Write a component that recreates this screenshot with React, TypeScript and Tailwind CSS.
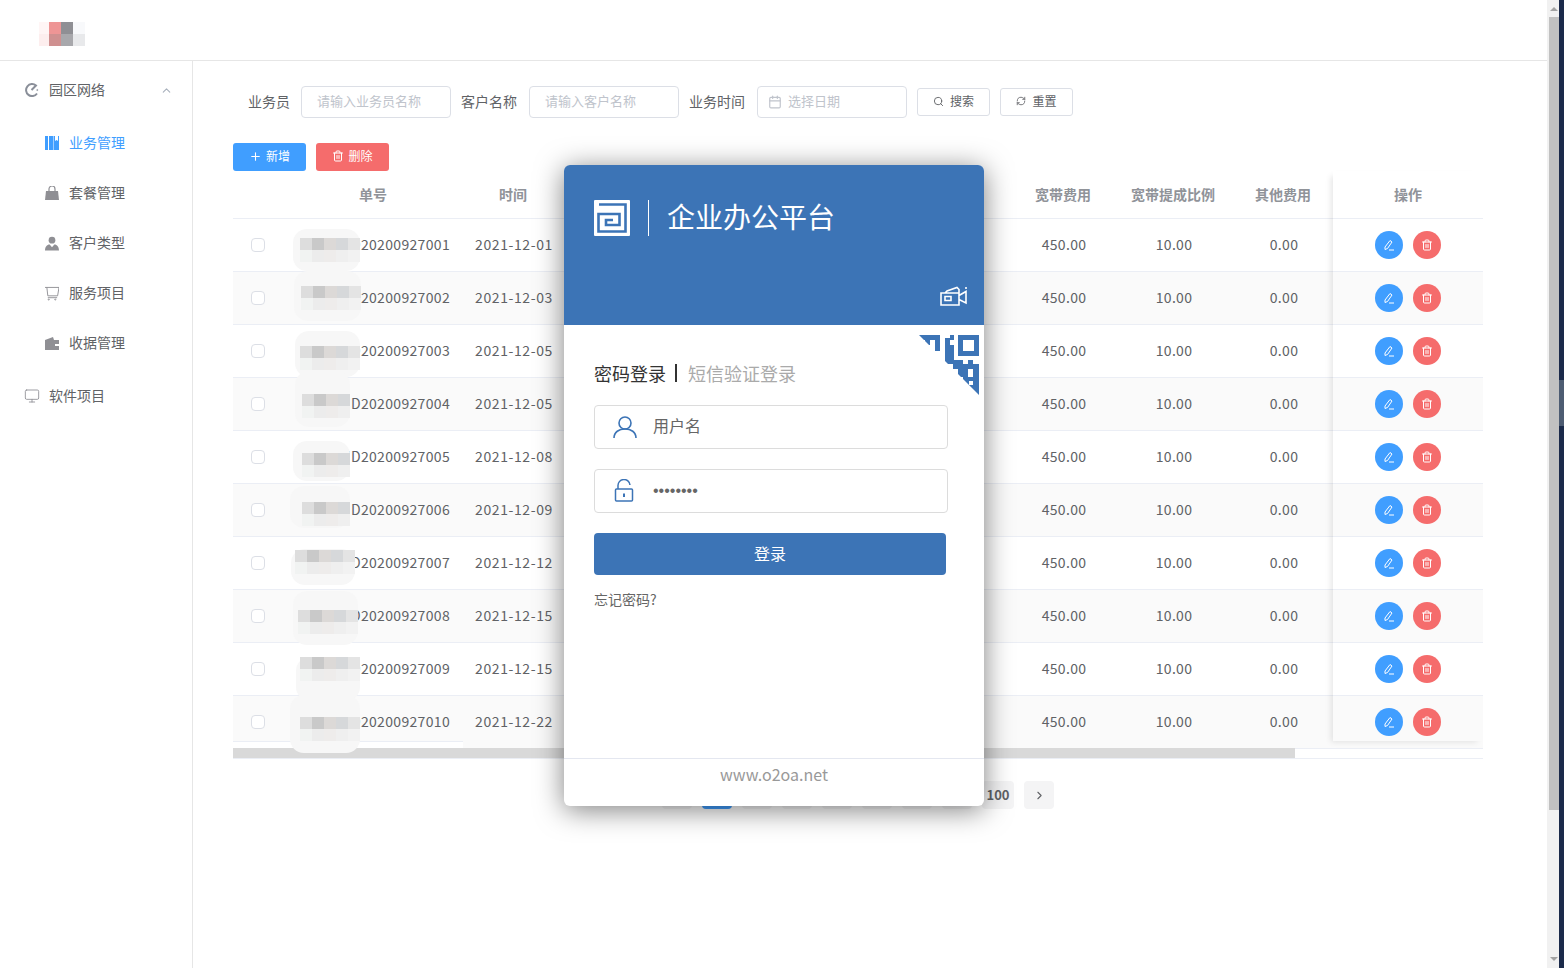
import { ChevronLeft, ChevronRight, ChevronUp, Calendar, Monitor, Plus, RefreshCw, Search, Trash2 } from 'lucide-react';

const rows = [
  { no: 'ID20200927001', date: '2021-12-01' },
  { no: 'ID20200927002', date: '2021-12-03' },
  { no: 'ID20200927003', date: '2021-12-05' },
  { no: 'ID20200927004', date: '2021-12-05' },
  { no: 'ID20200927005', date: '2021-12-08' },
  { no: 'ID20200927006', date: '2021-12-09' },
  { no: 'ID20200927007', date: '2021-12-12' },
  { no: 'ID20200927008', date: '2021-12-15' },
  { no: 'ID20200927009', date: '2021-12-15' },
  { no: 'ID20200927010', date: '2021-12-22' },
];

// mosaic smudges laid over the first column, coordinates relative to the table
const smudges = [
  { left: 60, top: 58, width: 67, height: 42, dark: 9, blocks: 5 },
  { left: 61, top: 100, width: 67, height: 50, dark: 15, blocks: 5 },
  { left: 62, top: 160, width: 65, height: 46, dark: 15, blocks: 5 },
  { left: 62, top: 200, width: 55, height: 56, dark: 23, blocks: 4 },
  { left: 60, top: 270, width: 57, height: 40, dark: 12, blocks: 4 },
  { left: 57, top: 315, width: 60, height: 42, dark: 16, blocks: 4 },
  { left: 58, top: 378, width: 64, height: 36, dark: 1, blocks: 5 },
  { left: 60, top: 420, width: 65, height: 54, dark: 19, blocks: 5 },
  { left: 63, top: 486, width: 64, height: 44, dark: 0, blocks: 5 },
  { left: 57, top: 524, width: 70, height: 58, dark: 22, blocks: 5 },
];

const greys = ['bg-[#dddddd]', 'bg-[#c9c9c9]', 'bg-[#dcd9d7]', 'bg-[#d6d8da]', 'bg-[#e4e4e4]'];
const lightGreys = ['bg-[#f1f3f2]', 'bg-[#ececec]', 'bg-[#eeeceb]', 'bg-[#efefef]', 'bg-[#f2f2f2]'];

function Label({ children }: { children: string }) {
  return <span className="pb-[2px] text-sm text-[#606266] whitespace-nowrap">{children}</span>;
}

function FilterInput({ placeholder }: { placeholder: string }) {
  return (
    <div className="flex h-8 w-[150px] items-center rounded border border-[#dcdfe6] pb-[2px] pl-[15px] text-[13px] text-[#c0c4cc]">
      {placeholder}
    </div>
  );
}

function OutlineButton({ icon, children }: { icon: React.ReactNode; children: string }) {
  return (
    <button className="flex h-7 w-[73px] items-center justify-center gap-[6px] rounded-[3px] border border-[#dcdfe6] pb-[2px] text-xs text-[#606266]">
      {icon}
      {children}
    </button>
  );
}

function NavItem({ icon, label, active }: { icon: React.ReactNode; label: string; active?: boolean }) {
  return (
    <div className={`flex h-[50px] items-center gap-[10px] pl-[45px] text-sm ${active ? 'text-[#409eff]' : 'text-[#606266]'}`}>
      <span className="flex w-[14px] justify-center">{icon}</span>
      <span className="pb-[2px]">{label}</span>
    </div>
  );
}

function EditIcon() {
  return (
    <svg width="12" height="12" viewBox="0 0 12 12" fill="none" stroke="white" strokeWidth="1">
      <path d="M2 8 7 1.5l2 1.5-4.5 6.5-2.5 1z" />
      <path d="M6 11h5" />
    </svg>
  );
}

function Row({ index, children }: { index: number; children: React.ReactNode }) {
  return (
    <div className={`flex h-[53px] shrink-0 items-center border-b border-[#ebeef5] text-sm text-[#606266] ${index % 2 === 1 ? 'bg-[#fafafa]' : 'bg-white'}`}>
      {children}
    </div>
  );
}

function HeadRow({ children }: { children: React.ReactNode }) {
  return (
    <div className="flex h-12 shrink-0 items-center border-b border-[#ebeef5] bg-white pb-[2px] text-sm font-bold text-[#909399]">
      {children}
    </div>
  );
}

function QrCorner() {
  return (
    <svg width="60" height="60" viewBox="0 0 60 60" className="absolute left-[355px] top-[10px]">
      <defs>
        <clipPath id="qr-corner">
          <polygon points="0,0 60,0 60,60" />
        </clipPath>
      </defs>
      <g clipPath="url(#qr-corner)" fill="#3c74b6">
        <path d="M39 0h21v21H39zM44 5v11h11V5z" fillRule="evenodd" />
        <rect x="0" y="0" width="21" height="5" />
        <rect x="16" y="0" width="5" height="16" />
        <rect x="6" y="5" width="5" height="5" />
        <rect x="26" y="3" width="5" height="22" />
        <rect x="31" y="0" width="4" height="5" />
        <rect x="31" y="10" width="4" height="15" />
        <rect x="26" y="25" width="18" height="4" />
        <rect x="49" y="25" width="5" height="4" />
        <rect x="34" y="29" width="26" height="5" />
        <rect x="39" y="34" width="10" height="8" />
        <rect x="54" y="34" width="6" height="8" />
        <path d="M44 42h16v18H44zM50 46v4h4v-4z" fillRule="evenodd" />
      </g>
    </svg>
  );
}

function LoginDialog() {
  return (
    <div className="absolute left-[564px] top-[165px] z-20 flex h-[641px] w-[420px] flex-col overflow-hidden rounded-md bg-white shadow-[0_4px_28px_rgba(0,0,0,0.5)]">
      <div className="relative h-40 bg-[#3c74b6] pl-[30px] pt-[35px]">
        <div className="flex h-9 items-center">
          <svg width="36" height="36" viewBox="0 0 36 36">
            <rect width="36" height="36" rx="1" fill="white" />
            <path d="M5 4.5h26.5v27h-27V14h21v11H12v-5h7" fill="none" stroke="#3c74b6" strokeWidth="2.6" />
          </svg>
          <div className="ml-[18px] h-9 w-px bg-white" />
          <span className="ml-[18px] pb-1 text-[28px] leading-9 text-white">企业办公平台</span>
        </div>
        <svg width="28" height="20" viewBox="0 0 28 20" fill="none" stroke="white" strokeWidth="1.6" className="absolute left-[376px] top-[121px]">
          <path d="M1 7h18v12H1zM5 7l2-2 10-3.5 2 2V7M19 9.5l7-4v11.5l-7-3.5M26 1v2" />
          <path d="M5 10.5h6v4H5z" />
        </svg>
      </div>
      <div className="relative flex flex-1 flex-col px-[30px]">
        <QrCorner />
        <div className="mt-[35px] flex h-[26px] items-center text-lg">
          <span className="text-[#333333]">密码登录</span>
          <span className="ml-[9px] mr-[11px] h-[18px] w-[2px] bg-[#333333]" />
          <span className="text-[#aaaaaa]">短信验证登录</span>
        </div>
        <div className="mt-[19px] flex h-11 w-[354px] items-center rounded border border-[#dcdcdc] pl-[18px] text-base text-[#666666]">
          <svg width="24" height="24" viewBox="0 0 24 24" fill="none" stroke="#3c74b6" strokeWidth="1.6">
            <circle cx="12" cy="8" r="6" />
            <path d="M1 23c0-6 5-9 11-9s11 3 11 9" />
          </svg>
          <span className="ml-4 pb-1">用户名</span>
        </div>
        <div className="mt-5 flex h-11 w-[354px] items-center rounded border border-[#dcdcdc] pl-[19px] text-base text-[#666666]">
          <svg width="20" height="24" viewBox="0 0 20 24" fill="none" stroke="#3c74b6" strokeWidth="1.5">
            <rect x="1.5" y="10" width="17" height="12" rx="1" />
            <path d="M4 10V7a6 6 0 0 1 12-1" />
            <path d="M10 14.5v3.5" strokeWidth="2" />
          </svg>
          <span className="ml-[19px] font-['Liberation_Sans',sans-serif] text-base leading-none">••••••••</span>
        </div>
        <button className="mt-5 h-[42px] w-[352px] rounded bg-[#3c74b6] pb-[2px] text-base text-white">登录</button>
        <div className="mt-[14px] text-sm text-[#666666]">忘记密码?</div>
      </div>
      <div className="h-12 border-t border-[#e4e7f0] pt-[3px] text-center text-base text-[#999999]">www.o2oa.net</div>
    </div>
  );
}

function Pagination() {
  const pages = ['1', '2', '3', '4', '5', '6', '7'];
  return (
    <div className="mt-[22px] flex justify-center gap-[10px] text-[13px] font-bold text-[#606266]">
      <span className="flex h-7 w-[30px] items-center justify-center rounded-sm bg-[#f4f4f5]">
        <ChevronLeft size={13} />
      </span>
      {pages.map((page, i) => (
        <span
          key={page}
          className={`flex h-7 w-[30px] items-center justify-center rounded-sm ${i === 0 ? 'bg-[#409eff] text-white' : 'bg-[#f4f4f5]'}`}
        >
          {page}
        </span>
      ))}
      <span className="flex h-7 w-8 items-center justify-center rounded-sm bg-[#f4f4f5]">100</span>
      <span className="flex h-7 w-[30px] items-center justify-center rounded-sm bg-[#f4f4f5]">
        <ChevronRight size={13} />
      </span>
    </div>
  );
}

function Table() {
  return (
    <div className="relative">
      <div className="flex items-start">
        {/* fixed left columns stop short of the horizontal scrollbar */}
        <div className="h-[571px] w-[230px] shrink-0 overflow-hidden border-b border-[#ebeef5]">
          <HeadRow>
            <span className="w-[60px]" />
            <span className="w-[160px] text-center">单号</span>
          </HeadRow>
          {rows.map((row, i) => (
            <Row key={row.no} index={i}>
              <span className="ml-[18px] h-[14px] w-[14px] rounded-sm border border-[#dcdfe6] bg-white" />
              <span className="ml-[28px] w-[157px] pb-[2px] text-right tracking-[0.33px]">{row.no}</span>
            </Row>
          ))}
        </div>
        <div className="min-w-0 flex-1">
          <HeadRow>
            <span className="w-[100px] text-center">时间</span>
            <span className="flex-1" />
            <span className="w-[110px] text-center">宽带费用</span>
            <span className="w-[110px] text-center">宽带提成比例</span>
            <span className="w-[110px] text-center">其他费用</span>
            <span className="w-[145px]" />
          </HeadRow>
          {rows.map((row, i) => (
            <Row key={row.no} index={i}>
              <span className="w-[100px] pb-[2px] pl-[2px] text-center tracking-[0.6px]">{row.date}</span>
              <span className="flex-1" />
              <span className="w-[110px] pb-[2px] pl-[2px] text-center tracking-[0.33px]">450.00</span>
              <span className="w-[110px] pb-[2px] pl-[2px] text-center tracking-[0.33px]">10.00</span>
              <span className="w-[110px] pb-[2px] pl-[2px] text-center tracking-[0.33px]">0.00</span>
              <span className="w-[145px]" />
            </Row>
          ))}
        </div>
      </div>

      {/* fixed action column */}
      <div className="absolute right-0 top-0 h-[570px] w-[150px] overflow-hidden shadow-[-4px_3px_6px_-2px_rgba(0,0,0,0.1)]">
        <HeadRow>
          <span className="w-full text-center">操作</span>
        </HeadRow>
        {rows.map((row, i) => (
          <Row key={row.no} index={i}>
            <div className="flex w-full justify-center gap-[10px]">
              <span className="flex h-7 w-7 items-center justify-center rounded-full bg-[#409eff]">
                <EditIcon />
              </span>
              <span className="flex h-7 w-7 items-center justify-center rounded-full bg-[#f56c6c]">
                <Trash2 size={12} color="white" />
              </span>
            </div>
          </Row>
        ))}
      </div>

      {smudges.map((s) => (
        <div
          key={s.top}
          className="absolute z-10 flex flex-col rounded-[14px] bg-[#f7f7f7]"
          style={{ left: s.left, top: s.top, width: s.width, height: s.height, paddingTop: s.dark }}
        >
          <div className="flex h-3 justify-end">
            {greys.slice(0, s.blocks).map((g) => (
              <span key={g} className={`w-3 ${g}`} />
            ))}
          </div>
          <div className="flex h-3 justify-end">
            {lightGreys.slice(0, s.blocks).map((g) => (
              <span key={g} className={`w-3 ${g}`} />
            ))}
          </div>
        </div>
      ))}

      <div className="relative -mt-px h-[11px] border-b border-[#ebeef5]">
        <div className="h-[10px] w-[1062px] bg-[#d9d9d9]" />
      </div>
    </div>
  );
}

export default function App() {
  return (
    <div className="relative flex h-[968px] w-full overflow-hidden bg-white font-['Noto_Sans_CJK_SC','Noto_Sans',sans-serif]">
      <div className="flex w-[1547px] shrink-0 flex-col">
        <header className="h-[61px] shrink-0 border-b border-[#e6e6e6] pl-[39px] pt-[22px]">
          {/* blurred logo */}
          <div className="grid w-[46px] grid-cols-[10px_12px_12px_12px]">
            <span className="h-3 bg-[#fff5f5]" />
            <span className="h-3 bg-[#ee9595]" />
            <span className="h-3 bg-[#8f8f94]" />
            <span className="h-3 bg-[#f8f9fb]" />
            <span className="h-3 bg-[#fdeeee]" />
            <span className="h-3 bg-[#cf9090]" />
            <span className="h-3 bg-[#a8a8ac]" />
            <span className="h-3 bg-[#e8e9eb]" />
          </div>
        </header>
        <div className="flex min-h-0 flex-1">
          <aside className="w-[193px] shrink-0 border-r border-[#e6e6e6] pt-[4px]">
            <div className="flex h-[50px] items-center pl-[25px] text-sm text-[#606266]">
              <svg width="14" height="14" viewBox="0 0 14 14" fill="none" stroke="#8a8f99" strokeWidth="2">
                <path d="M12 10.5A6 6 0 1 1 11 2.5L6.5 7" />
                <circle cx="12.3" cy="7" r="0.6" fill="#8a8f99" strokeWidth="0.6" />
              </svg>
              <span className="ml-[10px] pb-[2px]">园区网络</span>
              <ChevronUp size={13} className="ml-[55px] text-[#a8b0bc]" />
            </div>
            <div className="mt-[3px]">
              <NavItem
                active
                label="业务管理"
                icon={
                  <svg width="14" height="14" viewBox="0 0 14 14" fill="#409eff">
                    <path d="M0 0h3v14H0zM4 0h4v14H4zM8.5 0h1.5v5l1.5-1 1.5 1V0h1v14H8.5z" />
                  </svg>
                }
              />
              <NavItem
                label="套餐管理"
                icon={
                  <svg width="14" height="14" viewBox="0 0 14 14" fill="#8f8f94">
                    <path d="M1 5h12l1 9H0z" />
                    <path d="M4 6V3a3 3 0 0 1 6 0v3" fill="none" stroke="#8f8f94" strokeWidth="1.2" />
                  </svg>
                }
              />
              <NavItem
                label="客户类型"
                icon={
                  <svg width="15" height="15" viewBox="0 0 15 15" fill="#8f8f94">
                    <circle cx="7.5" cy="4" r="3.6" />
                    <path d="M0 15c0-4 2-6.5 5-6.5l2.5 3 2.5-3c3 0 5 2.5 5 6.5z" />
                  </svg>
                }
              />
              <NavItem
                label="服务项目"
                icon={
                  <svg width="15" height="15" viewBox="0 0 15 15" fill="none" stroke="#8f8f94" strokeWidth="1">
                    <path d="M0 1h15l-1.5 9H3L2 1" />
                    <path d="M3 12h10" />
                    <circle cx="4" cy="14" r="0.6" />
                    <circle cx="11" cy="14" r="0.6" />
                  </svg>
                }
              />
              <NavItem
                label="收据管理"
                icon={
                  <svg width="14" height="14" viewBox="0 0 14 14" fill="#8f8f94">
                    <path d="M0 4 8 1l1 3h5v10H0zM10 8v2h4V8z" fillRule="evenodd" />
                  </svg>
                }
              />
            </div>
            <div className="mt-[3px] flex h-[50px] items-center pl-[24px] text-sm text-[#606266]">
              <Monitor size={16} strokeWidth={1.3} className="text-[#8f8f94]" />
              <span className="ml-[9px] pb-[2px]">软件项目</span>
            </div>
          </aside>
          <main className="min-w-0 flex-1 pl-10 pr-16 pt-[25px]">
            <div className="flex h-8 items-center pl-[15px]">
              <Label>业务员</Label>
              <div className="ml-[11px]"><FilterInput placeholder="请输入业务员名称" /></div>
              <div className="ml-[10px] flex"><Label>客户名称</Label></div>
              <div className="ml-3"><FilterInput placeholder="请输入客户名称" /></div>
              <div className="ml-[10px] flex"><Label>业务时间</Label></div>
              <div className="ml-3 flex h-8 w-[150px] items-center gap-[6px] rounded border border-[#dcdfe6] pl-[10px] text-[13px] text-[#c0c4cc]">
                <Calendar size={14} />
                <span className="pb-[2px]">选择日期</span>
              </div>
              <div className="ml-[10px]"><OutlineButton icon={<Search size={11} />}>搜索</OutlineButton></div>
              <div className="ml-[10px]"><OutlineButton icon={<RefreshCw size={10} />}>重置</OutlineButton></div>
            </div>
            <div className="mt-[25px] flex gap-[10px]">
              <button className="flex h-7 w-[73px] items-center justify-center gap-1 rounded-[3px] bg-[#409eff] pb-[2px] text-xs text-white">
                <Plus size={13} />
                新增
              </button>
              <button className="flex h-7 w-[73px] items-center justify-center gap-1 rounded-[3px] bg-[#f56c6c] pb-[2px] text-xs text-white">
                <Trash2 size={12} />
                删除
              </button>
            </div>
            <Table />
            <Pagination />
          </main>
        </div>
      </div>

      {/* page scrollbar */}
      <div className="relative w-3 shrink-0 bg-[#f1f1f1] pl-[2px] pt-[17px]">
        <div className="h-[793px] w-[10px] bg-[#c1c1c1]" />
        <span className="absolute left-[3px] top-[7px] h-0 w-0 border-x-4 border-b-4 border-x-transparent border-b-[#a3a3a3]" />
        <span className="absolute bottom-[7px] left-[3px] h-0 w-0 border-x-4 border-t-4 border-x-transparent border-t-[#a3a3a3]" />
      </div>
      <div className="flex w-[5px] shrink-0 flex-col bg-[#1b2a4a]">
        <div className="mt-[380px] h-[46px] bg-[#4d5c72]" />
      </div>

      <LoginDialog />
    </div>
  );
}
